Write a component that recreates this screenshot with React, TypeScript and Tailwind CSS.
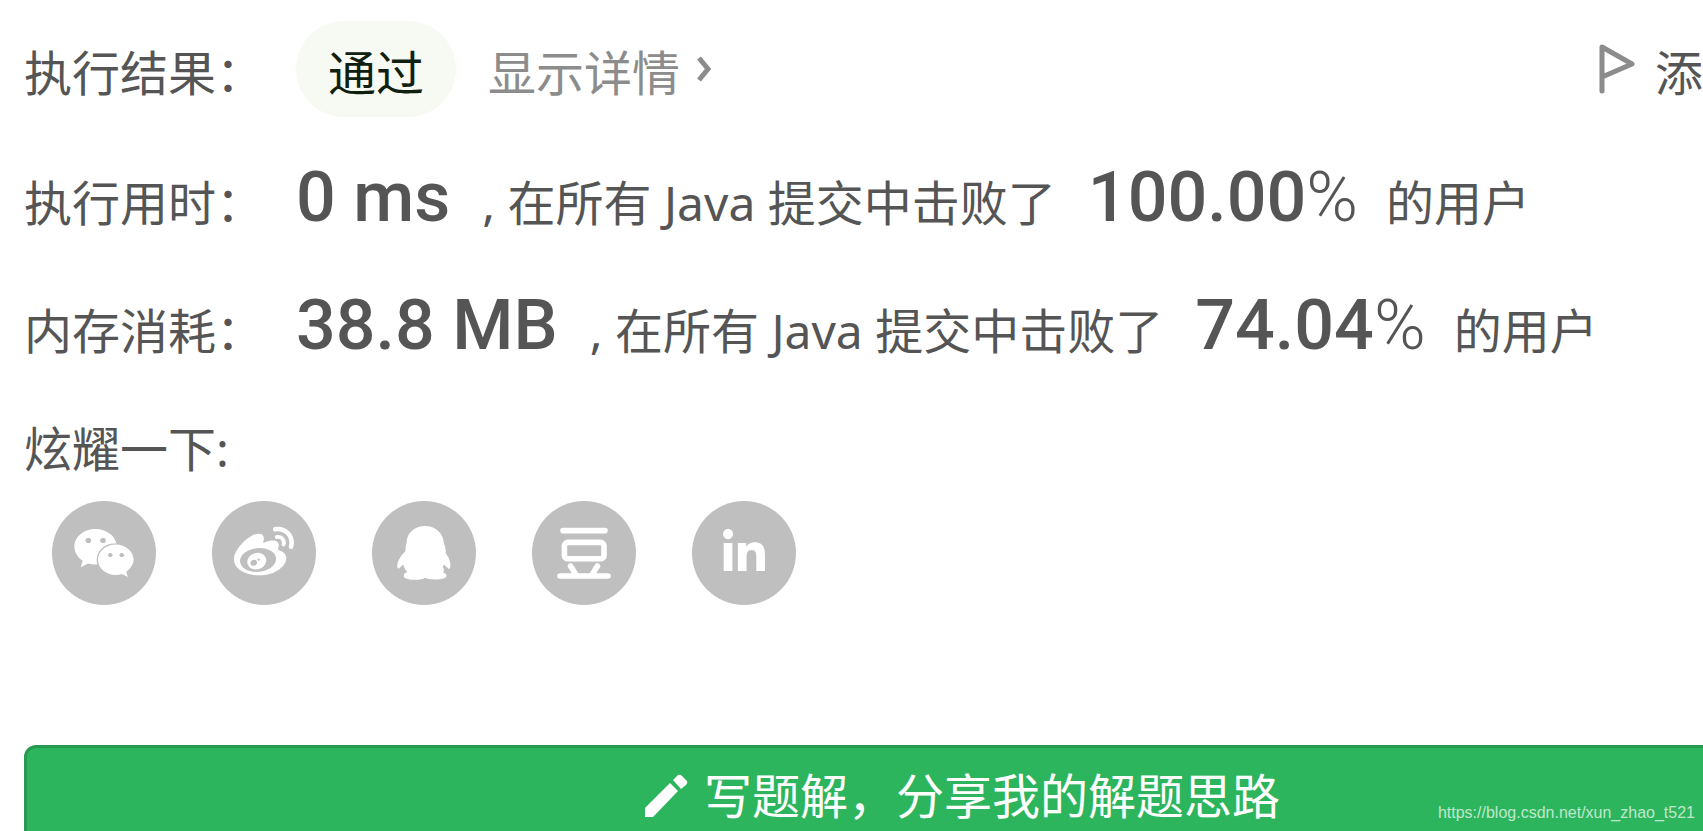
import type { ReactNode } from "react";
import { FaLinkedinIn, FaWeibo, FaWeixin } from "react-icons/fa";

type Stat = {
  label: string;
  value: string;
  percent: string;
};

const stats: Stat[] = [
  { label: "执行用时：", value: "0 ms", percent: "100.00" },
  { label: "内存消耗：", value: "38.8 MB", percent: "74.04" },
];

function DoubanIcon() {
  return (
    <svg width="56" height="56" viewBox="0 0 56 56" fill="none" stroke="currentColor" strokeWidth="5.6" strokeLinecap="round">
      <path d="M7 5.6h42M4 51h48M14.5 41l5 8M41.500 41l-5 8" />
      <rect x="8.4" y="17.4" width="39.6" height="16.4" rx="3.5" />
    </svg>
  );
}

function QqIcon() {
  return (
    <svg width="54" height="54" viewBox="0 0 54 54" fill="currentColor">
      <path d="M28 0C17.500 0 9.500 7 9.500 17.500c-.3 1.400-1 2.800-1 4.200 0 1.600.4 2.300-.4 3.700C4.500 29 1 33.500.3 39c-.3 3.600 1 4.500 2.700 2.600l3.300-3c.8 3.200 2 5.400 4 7.400-3.200 1.200-4 3-3.200 5 1.600 3.400 17 3.800 21 .8 4 2.600 19 2.200 21-.8 1-2.300-.4-3.600-3-4.400 1-1.200 1.300-3.600-.4-5.600l1.300-2.400 4.300 4c2 .9 2.200-1.800 2-4.600-.5-4.600-2-7.600-4.600-10.800.2-1.800.2-3.600-.4-5.200 0-1.500-.4-2.500-1.300-4C46.500 7 38.500 0 28 0z" />
    </svg>
  );
}

const shares: { name: string; icon: ReactNode }[] = [
  { name: "微信", icon: <FaWeixin size={62} /> },
  { name: "微博", icon: <FaWeibo size={60} /> },
  { name: "QQ", icon: <QqIcon /> },
  { name: "豆瓣", icon: <DoubanIcon /> },
  { name: "LinkedIn", icon: <FaLinkedinIn size={48} /> },
];

function StatRow({ label, value, percent }: Stat) {
  return (
    <div className="flex h-32 items-baseline whitespace-nowrap pt-6">
      <span className="w-[272px] shrink-0">{label}</span>
      <span className="font-[Roboto] text-[70px] font-medium">{value}</span>
      <span className="ml-8">, 在所有 Java 提交中击败了</span>
      <span className="ml-8 font-[Roboto] text-[70px] font-medium">
        {percent}
        <span className="font-light">%</span>
      </span>
      <span className="ml-7">的用户</span>
    </div>
  );
}

export default function App() {
  return (
    <div className="relative h-screen overflow-hidden bg-white pl-6 font-['Noto_Sans','Noto_Sans_CJK_SC',sans-serif] text-[48px] leading-[64px] text-[#555]">
      <div className="mb-6 flex items-center pt-[21px]">
        <span className="w-[272px] shrink-0 pt-2">执行结果：</span>
        <span className="rounded-[48px] bg-[#f7faf3] px-8 pb-3 pt-5 text-[#102010]">通过</span>
        <a href="#detail" className="ml-8 flex items-center gap-4 text-[#8c8c8c]">
          <span className="pt-2">显示详情</span>
          <svg width="16" height="26" viewBox="0 0 16 26" fill="none" stroke="currentColor" strokeWidth="5">
            <path d="M3 2l9 11-9 11" />
          </svg>
        </a>
        <button type="button" className="ml-auto flex items-center gap-5">
          <svg width="36" height="50" viewBox="0 0 36 50" fill="none" stroke="#8c8c8c" strokeWidth="5" strokeLinecap="round" strokeLinejoin="round">
            <path d="M3 47V3l30 17L3 33" />
          </svg>
          <span className="pt-2">添</span>
        </button>
      </div>

      {stats.map((s) => (
        <StatRow key={s.label} {...s} />
      ))}

      <div className="pt-5">炫耀一下:</div>
      <div className="mt-5 flex gap-14 pl-7">
        {shares.map((s) => (
          <button
            key={s.name}
            type="button"
            aria-label={s.name}
            className="flex size-[104px] items-center justify-center rounded-full bg-[#bfbfbf] text-white"
          >
            {s.icon}
          </button>
        ))}
      </div>

      <div className="-mr-[197px] mt-[140px]">
        <button
          type="button"
          className="flex w-full items-center justify-center gap-4 rounded-xl border-[3px] border-[#269a4e] bg-[#2db55d] py-4 text-white"
        >
          <svg width="44" height="44" viewBox="0 0 44 44" fill="currentColor">
            <path d="M1 34L26 9l8 8L9 43H1zM29 6l5-5q2-1 4 1l5 5q1 2-1 4l-5 4z" />
          </svg>
          写题解，分享我的解题思路
        </button>
      </div>

      <span className="absolute bottom-2 right-2 font-['Liberation_Sans',sans-serif] text-[16px] leading-5 text-white/70">
        https://blog.csdn.net/xun_zhao_t521
      </span>
    </div>
  );
}
